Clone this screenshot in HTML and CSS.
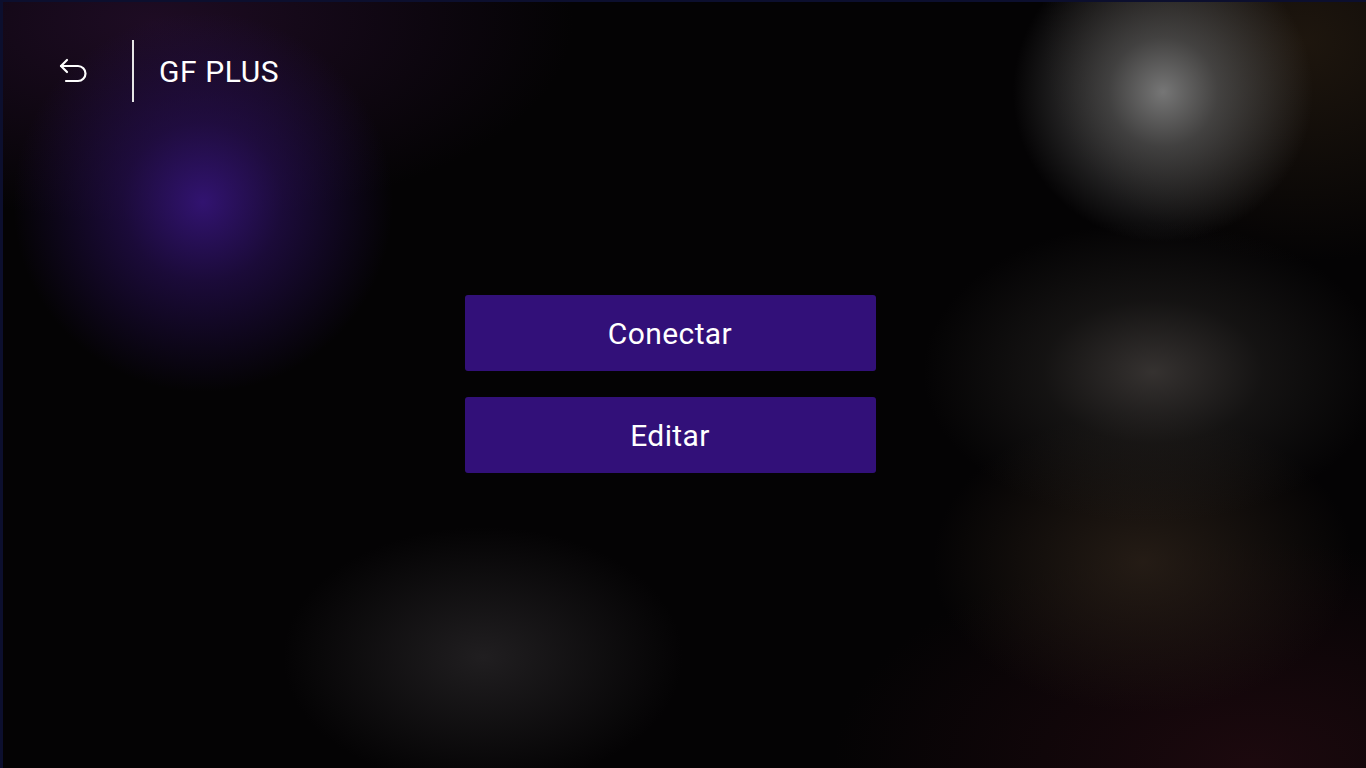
FILE: index.html
```html
<!DOCTYPE html>
<html lang="es">
<head>
  <meta charset="UTF-8" />
  <meta name="viewport" content="width=device-width, initial-scale=1.0"/>
  <title>GF PLUS</title>
  <link rel="stylesheet" href="styles.css">
</head>
<body>
  <div class="screen">
    <header class="topbar">
      <button class="back-btn" aria-label="Volver">
        <svg width="32" height="32" viewBox="0 0 32 32" fill="none" stroke="#fff" stroke-width="2.2" stroke-linecap="round" stroke-linejoin="round">
          <path d="M9 5 L3 11 L9 17" />
          <path d="M3 11 H20 A7.5 7.5 0 0 1 20 26 H8" />
        </svg>
      </button>
      <span class="divider"></span>
      <h1>GF PLUS</h1>
    </header>

    <main class="actions">
      <button class="action-btn">Conectar</button>
      <button class="action-btn">Editar</button>
    </main>
  </div>
</body>
</html>
```

FILE: styles.css
```css
html, body {
  margin: 0;
  padding: 0;
  height: 100%;
}

body {
  font-family: 'Roboto', 'Liberation Sans', sans-serif;
  background: #0c0f2e;
  color: #fff;
  overflow: hidden;
}

.screen {
  position: relative;
  box-sizing: border-box;
  margin: 2px 0 0 3px;
  width: 1363px;
  height: 766px;
  display: flex;
  flex-direction: column;
  background:
    radial-gradient(circle at 200px 200px, rgba(52, 20, 118, 0.95) 0, rgba(42, 16, 92, 0.6) 80px, rgba(25, 10, 50, 0) 190px),
    radial-gradient(circle at 1160px 90px, rgba(118, 118, 118, 1) 0, rgba(88, 88, 88, 0.7) 55px, rgba(40, 40, 40, 0) 150px),
    radial-gradient(ellipse 230px 150px at 1150px 370px, rgba(62, 58, 56, 0.85) 0, rgba(40, 38, 36, 0.45) 110px, rgba(0, 0, 0, 0) 230px),
    radial-gradient(ellipse 210px 150px at 1140px 560px, rgba(42, 32, 24, 0.85) 0, rgba(28, 20, 16, 0) 210px),
    radial-gradient(ellipse 200px 130px at 480px 655px, rgba(32, 30, 32, 1) 0, rgba(18, 16, 18, 0) 200px),
    radial-gradient(ellipse 420px 220px at 1250px 760px, rgba(28, 9, 14, 1) 0, rgba(20, 6, 10, 0) 420px),
    radial-gradient(ellipse 420px 200px at 150px 20px, rgba(30, 12, 36, 1) 0, rgba(20, 8, 24, 0) 420px),
    radial-gradient(ellipse 260px 220px at 1300px 40px, rgba(30, 22, 14, 1) 0, rgba(12, 8, 6, 0) 260px),
    #040304;
}

.topbar {
  display: flex;
  align-items: center;
  height: 62px;
  margin-top: 38px;
  padding-left: 55px;
}

.back-btn {
  background: none;
  border: none;
  padding: 0;
  width: 32px;
  height: 32px;
  cursor: pointer;
}

.back-btn svg {
  display: block;
}

.divider {
  width: 2px;
  height: 62px;
  background: #e6e6e6;
  margin: 0 25px 0 42px;
}

.topbar h1 {
  margin: 0;
  font-size: 30px;
  font-weight: 400;
  letter-spacing: 0.6px;
}

.actions {
  display: flex;
  flex-direction: column;
  align-items: center;
  gap: 26px;
  margin-top: 193px;
  padding-right: 29px;
}

.action-btn {
  width: 411px;
  height: 76px;
  border: none;
  border-radius: 3px;
  background: #321079;
  color: #fff;
  font-family: 'Roboto', 'Liberation Sans', sans-serif;
  font-size: 30px;
  letter-spacing: 0.4px;
  cursor: pointer;
}
```
